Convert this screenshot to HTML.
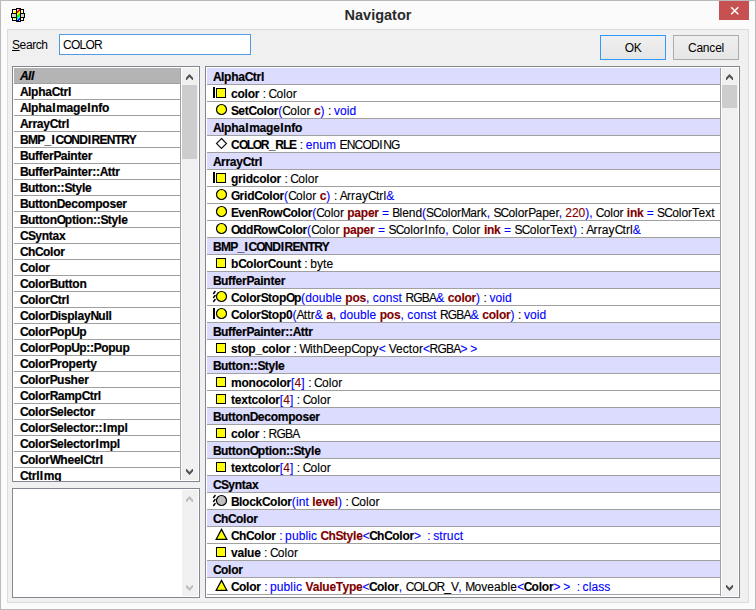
<!DOCTYPE html>
<html><head><meta charset="utf-8"><title>Navigator</title>
<style>
*{box-sizing:border-box}
html,body{margin:0;padding:0}
body{width:756px;height:610px;position:relative;overflow:hidden;background:#fbfbfb;font-family:"Liberation Sans",sans-serif;font-size:11px;color:#000}
.abs{position:absolute}
#outer{left:0;top:0;width:756px;height:610px;border:1px solid #bababa}
#title{left:0;width:756px;top:5px;text-align:center;font-weight:bold;font-size:14.5px;color:#2b2b2b;line-height:20px}
#close{left:719px;top:1px;width:30px;height:19px;background:#c75050}
#panel{left:7px;top:29px;width:742px;height:574px;background:#f0f0f0;border:1px solid #dcdcdc}
.lbl{line-height:13px}
#search{left:59px;top:34px;width:192px;height:21px;background:#fff;border:1px solid #5399e4}
.btn{top:35px;width:66px;height:25px;border:1px solid #acacac;background:linear-gradient(#f0f0f0,#e5e5e5);text-align:center;line-height:25px;font-size:12px}
.list{background:#fff;border:1px solid #828790;overflow:hidden}
.row{position:absolute;left:0;white-space:pre;border-bottom:1px solid #a0a0a0;overflow:hidden;font-size:12px}
.lrow{height:16px;width:166px;line-height:17px;padding-left:6px;font-weight:bold;letter-spacing:-0.22px;-webkit-text-stroke:0.2px currentColor}
.rrow{height:17px;width:513px;line-height:18px}
.hdr{background:#dcdcff;font-weight:bold;padding-left:6px;letter-spacing:-0.22px;-webkit-text-stroke:0.2px currentColor}
.it{padding-left:24px;letter-spacing:0.1px;-webkit-text-stroke:0.12px currentColor}
.Ur{letter-spacing:-0.8px}
.Ir{letter-spacing:0.5px;margin-left:0.5px}
.Ub{letter-spacing:-0.73px}
.Ib{letter-spacing:0.55px;margin-left:0.55px}
.Ob{letter-spacing:-1.4px}
.cl{letter-spacing:-0.9px}
.ab{letter-spacing:-0.5px}
.ic{position:absolute;left:4px;top:0}
.b{font-weight:bold;letter-spacing:-0.22px}
.u{color:#0000ff}
.r{color:#800000;font-weight:bold;letter-spacing:-0.22px}
.rr{color:#800000}
.sb{background:#f0f0f0}
.thumb{background:#cdcdcd}
</style></head><body>
<div id="outer" class="abs"></div>

<svg class="abs" style="left:11px;top:8px" width="14" height="14" viewBox="0 0 14 14" shape-rendering="crispEdges"><rect x="0" y="5" width="1" height="1" fill="#000"/><rect x="0" y="6" width="1" height="1" fill="#000"/><rect x="0" y="7" width="1" height="1" fill="#000"/><rect x="0" y="8" width="1" height="1" fill="#000"/><rect x="0" y="9" width="1" height="1" fill="#000"/><rect x="1" y="1" width="1" height="1" fill="#000"/><rect x="1" y="2" width="1" height="1" fill="#000"/><rect x="1" y="3" width="1" height="1" fill="#000"/><rect x="1" y="4" width="1" height="1" fill="#000"/><rect x="1" y="5" width="1" height="1" fill="#000"/><rect x="1" y="6" width="1" height="1" fill="#d0d0d0"/><rect x="1" y="7" width="1" height="1" fill="#d0d0d0"/><rect x="1" y="8" width="1" height="1" fill="#d0d0d0"/><rect x="1" y="9" width="1" height="1" fill="#000"/><rect x="1" y="10" width="1" height="1" fill="#000"/><rect x="1" y="11" width="1" height="1" fill="#000"/><rect x="1" y="12" width="1" height="1" fill="#000"/><rect x="2" y="1" width="1" height="1" fill="#000"/><rect x="2" y="2" width="1" height="1" fill="#ffffff"/><rect x="2" y="3" width="1" height="1" fill="#ffffff"/><rect x="2" y="4" width="1" height="1" fill="#ffffff"/><rect x="2" y="5" width="1" height="1" fill="#000"/><rect x="2" y="6" width="1" height="1" fill="#d0d0d0"/><rect x="2" y="7" width="1" height="1" fill="#d0d0d0"/><rect x="2" y="8" width="1" height="1" fill="#d0d0d0"/><rect x="2" y="9" width="1" height="1" fill="#000"/><rect x="2" y="10" width="1" height="1" fill="#ffffff"/><rect x="2" y="11" width="1" height="1" fill="#ffffff"/><rect x="2" y="12" width="1" height="1" fill="#000"/><rect x="3" y="1" width="1" height="1" fill="#000"/><rect x="3" y="2" width="1" height="1" fill="#ffffff"/><rect x="3" y="3" width="1" height="1" fill="#ffff00"/><rect x="3" y="4" width="1" height="1" fill="#ffff00"/><rect x="3" y="5" width="1" height="1" fill="#000"/><rect x="3" y="6" width="1" height="1" fill="#d0d0d0"/><rect x="3" y="7" width="1" height="1" fill="#d0d0d0"/><rect x="3" y="8" width="1" height="1" fill="#d0d0d0"/><rect x="3" y="9" width="1" height="1" fill="#000"/><rect x="3" y="10" width="1" height="1" fill="#ffff00"/><rect x="3" y="11" width="1" height="1" fill="#ffffff"/><rect x="3" y="12" width="1" height="1" fill="#000"/><rect x="4" y="1" width="1" height="1" fill="#000"/><rect x="4" y="2" width="1" height="1" fill="#ffffff"/><rect x="4" y="3" width="1" height="1" fill="#ffff00"/><rect x="4" y="4" width="1" height="1" fill="#ffff00"/><rect x="4" y="5" width="1" height="1" fill="#000"/><rect x="4" y="6" width="1" height="1" fill="#d0d0d0"/><rect x="4" y="7" width="1" height="1" fill="#d0d0d0"/><rect x="4" y="8" width="1" height="1" fill="#d0d0d0"/><rect x="4" y="9" width="1" height="1" fill="#000"/><rect x="4" y="10" width="1" height="1" fill="#ffff00"/><rect x="4" y="11" width="1" height="1" fill="#ffffff"/><rect x="4" y="12" width="1" height="1" fill="#000"/><rect x="5" y="0" width="1" height="1" fill="#000"/><rect x="5" y="1" width="1" height="1" fill="#000"/><rect x="5" y="2" width="1" height="1" fill="#000"/><rect x="5" y="3" width="1" height="1" fill="#000"/><rect x="5" y="4" width="1" height="1" fill="#000"/><rect x="5" y="5" width="1" height="1" fill="#000"/><rect x="5" y="6" width="1" height="1" fill="#000"/><rect x="5" y="7" width="1" height="1" fill="#000"/><rect x="5" y="8" width="1" height="1" fill="#000"/><rect x="5" y="9" width="1" height="1" fill="#000"/><rect x="5" y="10" width="1" height="1" fill="#000"/><rect x="5" y="11" width="1" height="1" fill="#000"/><rect x="5" y="12" width="1" height="1" fill="#000"/><rect x="5" y="13" width="1" height="1" fill="#000"/><rect x="6" y="0" width="1" height="1" fill="#000"/><rect x="6" y="1" width="1" height="1" fill="#d8d8d8"/><rect x="6" y="2" width="1" height="1" fill="#d8d8d8"/><rect x="6" y="3" width="1" height="1" fill="#ff0000"/><rect x="6" y="4" width="1" height="1" fill="#ff0000"/><rect x="6" y="5" width="1" height="1" fill="#ffff00"/><rect x="6" y="6" width="1" height="1" fill="#ffff00"/><rect x="6" y="7" width="1" height="1" fill="#80ff00"/><rect x="6" y="8" width="1" height="1" fill="#00ff00"/><rect x="6" y="9" width="1" height="1" fill="#00ff00"/><rect x="6" y="10" width="1" height="1" fill="#00ffff"/><rect x="6" y="11" width="1" height="1" fill="#00ffff"/><rect x="6" y="12" width="1" height="1" fill="#0000ff"/><rect x="6" y="13" width="1" height="1" fill="#000"/><rect x="7" y="0" width="1" height="1" fill="#000"/><rect x="7" y="1" width="1" height="1" fill="#d8d8d8"/><rect x="7" y="2" width="1" height="1" fill="#ff0000"/><rect x="7" y="3" width="1" height="1" fill="#ff0000"/><rect x="7" y="4" width="1" height="1" fill="#ffff00"/><rect x="7" y="5" width="1" height="1" fill="#ffff00"/><rect x="7" y="6" width="1" height="1" fill="#80ff00"/><rect x="7" y="7" width="1" height="1" fill="#00ff00"/><rect x="7" y="8" width="1" height="1" fill="#00ff00"/><rect x="7" y="9" width="1" height="1" fill="#00ffff"/><rect x="7" y="10" width="1" height="1" fill="#00ffff"/><rect x="7" y="11" width="1" height="1" fill="#0000ff"/><rect x="7" y="12" width="1" height="1" fill="#0000ff"/><rect x="7" y="13" width="1" height="1" fill="#000"/><rect x="8" y="0" width="1" height="1" fill="#000"/><rect x="8" y="1" width="1" height="1" fill="#ff0000"/><rect x="8" y="2" width="1" height="1" fill="#ff0000"/><rect x="8" y="3" width="1" height="1" fill="#ffff00"/><rect x="8" y="4" width="1" height="1" fill="#ffff00"/><rect x="8" y="5" width="1" height="1" fill="#80ff00"/><rect x="8" y="6" width="1" height="1" fill="#00ff00"/><rect x="8" y="7" width="1" height="1" fill="#00ff00"/><rect x="8" y="8" width="1" height="1" fill="#00ffff"/><rect x="8" y="9" width="1" height="1" fill="#00ffff"/><rect x="8" y="10" width="1" height="1" fill="#0000ff"/><rect x="8" y="11" width="1" height="1" fill="#0000ff"/><rect x="8" y="12" width="1" height="1" fill="#d8d8d8"/><rect x="8" y="13" width="1" height="1" fill="#000"/><rect x="9" y="0" width="1" height="1" fill="#000"/><rect x="9" y="1" width="1" height="1" fill="#000"/><rect x="9" y="2" width="1" height="1" fill="#000"/><rect x="9" y="3" width="1" height="1" fill="#000"/><rect x="9" y="4" width="1" height="1" fill="#000"/><rect x="9" y="5" width="1" height="1" fill="#000"/><rect x="9" y="6" width="1" height="1" fill="#000"/><rect x="9" y="7" width="1" height="1" fill="#000"/><rect x="9" y="8" width="1" height="1" fill="#000"/><rect x="9" y="9" width="1" height="1" fill="#000"/><rect x="9" y="10" width="1" height="1" fill="#000"/><rect x="9" y="11" width="1" height="1" fill="#000"/><rect x="9" y="12" width="1" height="1" fill="#000"/><rect x="9" y="13" width="1" height="1" fill="#000"/><rect x="10" y="1" width="1" height="1" fill="#000"/><rect x="10" y="2" width="1" height="1" fill="#ffffff"/><rect x="10" y="3" width="1" height="1" fill="#ffff00"/><rect x="10" y="4" width="1" height="1" fill="#ffff00"/><rect x="10" y="5" width="1" height="1" fill="#000"/><rect x="10" y="6" width="1" height="1" fill="#d0d0d0"/><rect x="10" y="7" width="1" height="1" fill="#d0d0d0"/><rect x="10" y="8" width="1" height="1" fill="#d0d0d0"/><rect x="10" y="9" width="1" height="1" fill="#000"/><rect x="10" y="10" width="1" height="1" fill="#ffff00"/><rect x="10" y="11" width="1" height="1" fill="#ffffff"/><rect x="10" y="12" width="1" height="1" fill="#000"/><rect x="11" y="1" width="1" height="1" fill="#000"/><rect x="11" y="2" width="1" height="1" fill="#ffffff"/><rect x="11" y="3" width="1" height="1" fill="#ffffff"/><rect x="11" y="4" width="1" height="1" fill="#ffffff"/><rect x="11" y="5" width="1" height="1" fill="#000"/><rect x="11" y="6" width="1" height="1" fill="#d0d0d0"/><rect x="11" y="7" width="1" height="1" fill="#d0d0d0"/><rect x="11" y="8" width="1" height="1" fill="#d0d0d0"/><rect x="11" y="9" width="1" height="1" fill="#000"/><rect x="11" y="10" width="1" height="1" fill="#ffffff"/><rect x="11" y="11" width="1" height="1" fill="#ffffff"/><rect x="11" y="12" width="1" height="1" fill="#000"/><rect x="12" y="1" width="1" height="1" fill="#000"/><rect x="12" y="2" width="1" height="1" fill="#000"/><rect x="12" y="3" width="1" height="1" fill="#000"/><rect x="12" y="4" width="1" height="1" fill="#000"/><rect x="12" y="5" width="1" height="1" fill="#000"/><rect x="12" y="6" width="1" height="1" fill="#d0d0d0"/><rect x="12" y="7" width="1" height="1" fill="#d0d0d0"/><rect x="12" y="8" width="1" height="1" fill="#d0d0d0"/><rect x="12" y="9" width="1" height="1" fill="#000"/><rect x="12" y="10" width="1" height="1" fill="#000"/><rect x="12" y="11" width="1" height="1" fill="#000"/><rect x="12" y="12" width="1" height="1" fill="#000"/><rect x="13" y="5" width="1" height="1" fill="#000"/><rect x="13" y="6" width="1" height="1" fill="#000"/><rect x="13" y="7" width="1" height="1" fill="#000"/><rect x="13" y="8" width="1" height="1" fill="#000"/><rect x="13" y="9" width="1" height="1" fill="#000"/></svg>
<div id="title" class="abs">Navigator</div>
<div id="close" class="abs"><svg width="30" height="19" viewBox="0 0 30 19"><path d="M12.2 6.2 L19.3 13.3 M19.3 6.2 L12.2 13.3" stroke="#fff" stroke-width="1.5"/></svg></div>
<div id="panel" class="abs"></div>
<div class="abs lbl" style="left:12px;top:39px;font-size:12px;letter-spacing:-0.4px"><span style="text-decoration:underline">S</span>earch</div>
<div id="search" class="abs"><div class="abs lbl" style="left:3px;top:4px;font-size:12px;letter-spacing:-0.75px">COLOR</div></div>
<div class="abs btn" style="left:600px;border-color:#3399ff;letter-spacing:-0.5px">OK</div>
<div class="abs btn" style="left:673px;letter-spacing:-0.2px">Cancel</div>

<div class="abs list" style="left:12px;top:66px;width:188px;height:416px">
<div class="row lrow" style="top:1px;left:1px;background:#b4b4b4;font-style:italic;"><span class="Ub">A</span>ll</div>
<div class="row lrow" style="top:17px;left:1px;"><span class="Ub">A</span>lpha<span class="Ub">C</span>trl</div>
<div class="row lrow" style="top:33px;left:1px;"><span class="Ub">A</span>lpha<span class="Ib">I</span>mage<span class="Ib">I</span>nfo</div>
<div class="row lrow" style="top:49px;left:1px;"><span class="Ub">A</span>rray<span class="Ub">C</span>trl</div>
<div class="row lrow" style="top:65px;left:1px;"><span class="Ub">BMP</span>_<span class="Ib">I</span><span class="Ub">C</span><span class="Ob">O</span><span class="Ub">ND</span><span class="Ib">I</span><span class="Ub">RENTRY</span></div>
<div class="row lrow" style="top:81px;left:1px;"><span class="Ub">B</span>uffer<span class="Ub">P</span>ainter</div>
<div class="row lrow" style="top:97px;left:1px;"><span class="Ub">B</span>uffer<span class="Ub">P</span>ainter::<span class="Ub">A</span>ttr</div>
<div class="row lrow" style="top:113px;left:1px;"><span class="Ub">B</span>utton::<span class="Ub">S</span>tyle</div>
<div class="row lrow" style="top:129px;left:1px;"><span class="Ub">B</span>utton<span class="Ub">D</span>ecomposer</div>
<div class="row lrow" style="top:145px;left:1px;"><span class="Ub">B</span>utton<span class="Ob">O</span>ption::<span class="Ub">S</span>tyle</div>
<div class="row lrow" style="top:161px;left:1px;"><span class="Ub">CS</span>yntax</div>
<div class="row lrow" style="top:177px;left:1px;"><span class="Ub">C</span>h<span class="Ub">C</span>olor</div>
<div class="row lrow" style="top:193px;left:1px;"><span class="Ub">C</span>olor</div>
<div class="row lrow" style="top:209px;left:1px;"><span class="Ub">C</span>olor<span class="Ub">B</span>utton</div>
<div class="row lrow" style="top:225px;left:1px;"><span class="Ub">C</span>olor<span class="Ub">C</span>trl</div>
<div class="row lrow" style="top:241px;left:1px;"><span class="Ub">C</span>olor<span class="Ub">D</span>isplay<span class="Ub">N</span>ull</div>
<div class="row lrow" style="top:257px;left:1px;"><span class="Ub">C</span>olor<span class="Ub">P</span>op<span class="Ub">U</span>p</div>
<div class="row lrow" style="top:273px;left:1px;"><span class="Ub">C</span>olor<span class="Ub">P</span>op<span class="Ub">U</span>p::<span class="Ub">P</span>opup</div>
<div class="row lrow" style="top:289px;left:1px;"><span class="Ub">C</span>olor<span class="Ub">P</span>roperty</div>
<div class="row lrow" style="top:305px;left:1px;"><span class="Ub">C</span>olor<span class="Ub">P</span>usher</div>
<div class="row lrow" style="top:321px;left:1px;"><span class="Ub">C</span>olor<span class="Ub">R</span>amp<span class="Ub">C</span>trl</div>
<div class="row lrow" style="top:337px;left:1px;"><span class="Ub">C</span>olor<span class="Ub">S</span>elector</div>
<div class="row lrow" style="top:353px;left:1px;"><span class="Ub">C</span>olor<span class="Ub">S</span>elector::<span class="Ib">I</span>mpl</div>
<div class="row lrow" style="top:369px;left:1px;"><span class="Ub">C</span>olor<span class="Ub">S</span>elector<span class="Ib">I</span>mpl</div>
<div class="row lrow" style="top:385px;left:1px;"><span class="Ub">C</span>olor<span class="Ub">W</span>heel<span class="Ub">C</span>trl</div>
<div class="row lrow" style="top:401px;left:1px;"><span class="Ub">C</span>trl<span class="Ib">I</span>mg</div>
<div class="abs" style="left:0;top:0;width:186px;height:1px;background:#fff"></div>
<div class="abs" style="left:167px;top:1px;width:1px;height:412px;background:#a0a0a0"></div>
<div class="abs" style="left:168px;top:0;width:18px;height:414px;background:#fff"></div>
<div class="abs sb" style="left:169px;top:1px;width:16px;height:412px"></div>
<div class="abs thumb" style="left:169px;top:18px;width:15px;height:74px"></div>
<svg class="abs" style="left:173px;top:7px" width="7" height="6" viewBox="0 0 7 6"><polygon points="0,3.8 3.5,0 7,3.8 7,6 6.26,6 3.5,3 0.74,6 0,6" fill="#505050"/></svg>
<svg class="abs" style="left:173px;top:402px" width="7" height="6" viewBox="0 0 7 6"><polygon points="0,3.8 3.5,0 7,3.8 7,6 6.26,6 3.5,3 0.74,6 0,6" fill="#505050" transform="translate(0,6) scale(1,-1)"/></svg>
</div>
<div class="abs list" style="left:12px;top:488px;width:188px;height:110px">
<div class="abs sb" style="left:169px;top:1px;width:16px;height:106px"></div>
<svg class="abs" style="left:173px;top:7px" width="7" height="6" viewBox="0 0 7 6"><polygon points="0,3.8 3.5,0 7,3.8 7,6 6.26,6 3.5,3 0.74,6 0,6" fill="#bcbcbc"/></svg>
<svg class="abs" style="left:173px;top:96px" width="7" height="6" viewBox="0 0 7 6"><polygon points="0,3.8 3.5,0 7,3.8 7,6 6.26,6 3.5,3 0.74,6 0,6" fill="#bcbcbc" transform="translate(0,6) scale(1,-1)"/></svg>
</div>
<div class="abs list" style="left:205px;top:66px;width:535px;height:532px">
<div class="row rrow hdr" style="top:1px;left:1px"><span class="Ub">A</span>lpha<span class="Ub">C</span>trl</div>
<div class="row rrow it" style="top:18px;left:1px"><svg class="ic" width="20" height="16" viewBox="0 0 20 16"><rect x="5.5" y="3.5" width="9" height="9" fill="#ff0" stroke="#000"/><rect x="2" y="2" width="2" height="11" fill="#000"/></svg><span class="b">color</span> <span class="cl">:</span> <span class="Ur">C</span>olor</div>
<div class="row rrow it" style="top:35px;left:1px"><svg class="ic" width="20" height="16" viewBox="0 0 20 16"><circle cx="10.5" cy="7.5" r="5" fill="#ff0" stroke="#000" stroke-width="1.2"/></svg><span class="b"><span class="Ub">S</span>et<span class="Ub">C</span>olor</span><span class="u">(</span><span class="Ur">C</span>olor <span class="r">c</span><span class="u">)</span> <span class="cl">:</span> <span class="u">void</span></div>
<div class="row rrow hdr" style="top:52px;left:1px"><span class="Ub">A</span>lpha<span class="Ib">I</span>mage<span class="Ib">I</span>nfo</div>
<div class="row rrow it" style="top:69px;left:1px"><svg class="ic" width="20" height="16" viewBox="0 0 20 16"><path d="M10.5 2.5 L15.5 7.5 L10.5 12.5 L5.5 7.5 Z" fill="#fff" stroke="#111" stroke-width="1.15"/></svg><span class="b"><span class="Ub">C</span><span class="Ob">OLO</span><span class="Ub">R</span>_<span class="Ub">R</span><span class="Ob">L</span><span class="Ub">E</span></span> <span class="cl">:</span> <span class="u">enum</span> <span class="Ur">ENCOD</span><span class="Ir">I</span><span class="Ur">NG</span></div>
<div class="row rrow hdr" style="top:86px;left:1px"><span class="Ub">A</span>rray<span class="Ub">C</span>trl</div>
<div class="row rrow it" style="top:103px;left:1px"><svg class="ic" width="20" height="16" viewBox="0 0 20 16"><rect x="5.5" y="3.5" width="9" height="9" fill="#ff0" stroke="#000"/><rect x="2" y="2" width="2" height="11" fill="#000"/></svg><span class="b">gridcolor</span> <span class="cl">:</span> <span class="Ur">C</span>olor</div>
<div class="row rrow it" style="top:120px;left:1px"><svg class="ic" width="20" height="16" viewBox="0 0 20 16"><circle cx="10.5" cy="7.5" r="5" fill="#ff0" stroke="#000" stroke-width="1.2"/></svg><span class="b"><span class="Ub">G</span>rid<span class="Ub">C</span>olor</span><span class="u">(</span><span class="Ur">C</span>olor <span class="r">c</span><span class="u">)</span> <span class="cl">:</span> <span class="Ur">A</span>rray<span class="Ur">C</span>trl<span class="u">&amp;</span></div>
<div class="row rrow it" style="top:137px;left:1px"><svg class="ic" width="20" height="16" viewBox="0 0 20 16"><circle cx="10.5" cy="7.5" r="5" fill="#ff0" stroke="#000" stroke-width="1.2"/></svg><span style="display:inline-block;width:486px;overflow:hidden;vertical-align:top;white-space:pre;letter-spacing:-0.04px"><span class="b"><span class="Ub">E</span>ven<span class="Ub">R</span>ow<span class="Ub">C</span>olor</span><span class="u">(</span><span class="Ur">C</span>olor <span class="r">paper</span><span class="u"> = </span><span class="Ur">B</span>lend<span class="u">(</span><span class="Ur">SC</span>olor<span class="Ur">M</span>ark<span class="u">, </span><span class="Ur">SC</span>olor<span class="Ur">P</span>aper<span class="u">, </span><span class="rr">220</span><span class="u">), </span><span class="Ur">C</span>olor <span class="r">ink</span><span class="u"> = </span><span class="Ur">SC</span>olor<span class="Ur">T</span>ext</span></div>
<div class="row rrow it" style="top:154px;left:1px"><svg class="ic" width="20" height="16" viewBox="0 0 20 16"><circle cx="10.5" cy="7.5" r="5" fill="#ff0" stroke="#000" stroke-width="1.2"/></svg><span class="b"><span class="Ob">O</span>dd<span class="Ub">R</span>ow<span class="Ub">C</span>olor</span><span class="u">(</span><span class="Ur">C</span>olor <span class="r">paper</span><span class="u"> = </span><span class="Ur">SC</span>olor<span class="Ir">I</span>nfo<span class="u">, </span><span class="Ur">C</span>olor <span class="r">ink</span><span class="u"> = </span><span class="Ur">SC</span>olor<span class="Ur">T</span>ext<span class="u">)</span> <span class="cl">:</span> <span class="Ur">A</span>rray<span class="Ur">C</span>trl<span class="u">&amp;</span></div>
<div class="row rrow hdr" style="top:171px;left:1px"><span class="Ub">BMP</span>_<span class="Ib">I</span><span class="Ub">C</span><span class="Ob">O</span><span class="Ub">ND</span><span class="Ib">I</span><span class="Ub">RENTRY</span></div>
<div class="row rrow it" style="top:188px;left:1px"><svg class="ic" width="20" height="16" viewBox="0 0 20 16"><rect x="5.5" y="3.5" width="9" height="9" fill="#ff0" stroke="#000"/></svg><span class="b">b<span class="Ub">C</span>olor<span class="Ub">C</span>ount</span> <span class="cl">:</span> byte</div>
<div class="row rrow hdr" style="top:205px;left:1px"><span class="Ub">B</span>uffer<span class="Ub">P</span>ainter</div>
<div class="row rrow it" style="top:222px;left:1px"><svg class="ic" width="20" height="16" viewBox="0 0 20 16"><circle cx="10.5" cy="7.5" r="5" fill="#ff0" stroke="#000" stroke-width="1.2"/><path d="M4.1 2.5 L2.6 4.5 M4.1 6.5 L2.6 8.5 M4.1 10.5 L2.6 12.5" stroke="#000" stroke-width="1.5" stroke-linecap="round" fill="none"/></svg><span class="b"><span class="Ub">C</span>olor<span class="Ub">S</span>top<span class="Ob">O</span>p</span><span class="u">(</span><span class="u">double </span><span class="r">pos</span><span class="u">, </span><span class="u">const </span><span class="Ur">RGBA</span><span class="u">&amp; </span><span class="r">color</span><span class="u">)</span> <span class="cl">:</span> <span class="u">void</span></div>
<div class="row rrow it" style="top:239px;left:1px"><svg class="ic" width="20" height="16" viewBox="0 0 20 16"><circle cx="10.5" cy="7.5" r="5" fill="#ff0" stroke="#000" stroke-width="1.2"/><rect x="2" y="2" width="2" height="11" fill="#000"/></svg><span class="b"><span class="Ub">C</span>olor<span class="Ub">S</span>top0</span><span class="u">(</span><span class="Ur">A</span>ttr<span class="u">&amp; </span><span class="r">a</span><span class="u">, </span><span class="u">double </span><span class="r">pos</span><span class="u">, </span><span class="u">const </span><span class="Ur">RGBA</span><span class="u">&amp; </span><span class="r">color</span><span class="u">)</span> <span class="cl">:</span> <span class="u">void</span></div>
<div class="row rrow hdr" style="top:256px;left:1px"><span class="Ub">B</span>uffer<span class="Ub">P</span>ainter::<span class="Ub">A</span>ttr</div>
<div class="row rrow it" style="top:273px;left:1px"><svg class="ic" width="20" height="16" viewBox="0 0 20 16"><rect x="5.5" y="3.5" width="9" height="9" fill="#ff0" stroke="#000"/></svg><span class="b">stop_color</span> <span class="cl">:</span> <span class="Ur">W</span>ith<span class="Ur">D</span>eep<span class="Ur">C</span>opy<span class="u"><span class="ab">&lt;</span> </span><span class="Ur">V</span>ector<span class="u"><span class="ab">&lt;</span></span><span class="Ur">RGBA</span><span class="u"><span class="ab">&gt;</span> <span class="ab">&gt;</span></span></div>
<div class="row rrow hdr" style="top:290px;left:1px"><span class="Ub">B</span>utton::<span class="Ub">S</span>tyle</div>
<div class="row rrow it" style="top:307px;left:1px"><svg class="ic" width="20" height="16" viewBox="0 0 20 16"><rect x="5.5" y="3.5" width="9" height="9" fill="#ff0" stroke="#000"/></svg><span class="b">monocolor</span><span class="u">[</span><span class="rr">4</span><span class="u">]</span> <span class="cl">:</span> <span class="Ur">C</span>olor</div>
<div class="row rrow it" style="top:324px;left:1px"><svg class="ic" width="20" height="16" viewBox="0 0 20 16"><rect x="5.5" y="3.5" width="9" height="9" fill="#ff0" stroke="#000"/></svg><span class="b">textcolor</span><span class="u">[</span><span class="rr">4</span><span class="u">]</span> <span class="cl">:</span> <span class="Ur">C</span>olor</div>
<div class="row rrow hdr" style="top:341px;left:1px"><span class="Ub">B</span>utton<span class="Ub">D</span>ecomposer</div>
<div class="row rrow it" style="top:358px;left:1px"><svg class="ic" width="20" height="16" viewBox="0 0 20 16"><rect x="5.5" y="3.5" width="9" height="9" fill="#ff0" stroke="#000"/></svg><span class="b">color</span> <span class="cl">:</span> <span class="Ur">RGBA</span></div>
<div class="row rrow hdr" style="top:375px;left:1px"><span class="Ub">B</span>utton<span class="Ob">O</span>ption::<span class="Ub">S</span>tyle</div>
<div class="row rrow it" style="top:392px;left:1px"><svg class="ic" width="20" height="16" viewBox="0 0 20 16"><rect x="5.5" y="3.5" width="9" height="9" fill="#ff0" stroke="#000"/></svg><span class="b">textcolor</span><span class="u">[</span><span class="rr">4</span><span class="u">]</span> <span class="cl">:</span> <span class="Ur">C</span>olor</div>
<div class="row rrow hdr" style="top:409px;left:1px"><span class="Ub">CS</span>yntax</div>
<div class="row rrow it" style="top:426px;left:1px"><svg class="ic" width="20" height="16" viewBox="0 0 20 16"><circle cx="10.5" cy="7.5" r="5" fill="#c0c0c0" stroke="#000" stroke-width="1.2"/><path d="M4.1 2.5 L2.6 4.5 M4.1 6.5 L2.6 8.5 M4.1 10.5 L2.6 12.5" stroke="#000" stroke-width="1.5" stroke-linecap="round" fill="none"/></svg><span class="b"><span class="Ub">B</span>lock<span class="Ub">C</span>olor</span><span class="u">(</span><span class="u">int </span><span class="r">level</span><span class="u">)</span> <span class="cl">:</span> <span class="Ur">C</span>olor</div>
<div class="row rrow hdr" style="top:443px;left:1px"><span class="Ub">C</span>h<span class="Ub">C</span>olor</div>
<div class="row rrow it" style="top:460px;left:1px"><svg class="ic" width="20" height="16" viewBox="0 0 20 16"><path d="M10.5 2.4 L15.8 12.3 L5.2 12.3 Z" fill="#ff0" stroke="#000" stroke-width="1.3" stroke-linejoin="miter"/></svg><span class="b"><span class="Ub">C</span>h<span class="Ub">C</span>olor</span><span class="u"> <span class="cl">:</span> public </span><span class="r"><span class="Ub">C</span>h<span class="Ub">S</span>tyle</span><span class="u"><span class="ab">&lt;</span></span><span class="b"><span class="Ub">C</span>h<span class="Ub">C</span>olor</span><span class="u"><span class="ab">&gt;</span>  <span class="cl">:</span> struct</span></div>
<div class="row rrow it" style="top:477px;left:1px"><svg class="ic" width="20" height="16" viewBox="0 0 20 16"><rect x="5.5" y="3.5" width="9" height="9" fill="#ff0" stroke="#000"/></svg><span class="b">value</span> <span class="cl">:</span> <span class="Ur">C</span>olor</div>
<div class="row rrow hdr" style="top:494px;left:1px"><span class="Ub">C</span>olor</div>
<div class="row rrow it" style="top:511px;left:1px"><svg class="ic" width="20" height="16" viewBox="0 0 20 16"><path d="M10.5 2.4 L15.8 12.3 L5.2 12.3 Z" fill="#ff0" stroke="#000" stroke-width="1.3" stroke-linejoin="miter"/></svg><span class="b"><span class="Ub">C</span>olor</span><span class="u"> <span class="cl">:</span> public </span><span class="r"><span class="Ub">V</span>alue<span class="Ub">T</span>ype</span><span class="u"><span class="ab">&lt;</span></span><span class="b"><span class="Ub">C</span>olor</span><span class="u">, </span><span class="Ur">COLOR</span>_<span class="Ur">V</span><span class="u">, </span><span class="Ur">M</span>oveable<span class="u"><span class="ab">&lt;</span></span><span class="b"><span class="Ub">C</span>olor</span><span class="u"><span class="ab">&gt;</span> <span class="ab">&gt;</span>  <span class="cl">:</span> class</span></div>
<div class="abs" style="left:0;top:0;width:533px;height:1px;background:#fff"></div>
<div class="abs" style="left:514px;top:1px;width:1px;height:528px;background:#a0a0a0"></div>
<div class="abs" style="left:515px;top:0;width:18px;height:530px;background:#fff"></div>
<div class="abs sb" style="left:516px;top:1px;width:16px;height:528px"></div>
<div class="abs thumb" style="left:516px;top:18px;width:15px;height:23px"></div>
<svg class="abs" style="left:520px;top:7px" width="7" height="6" viewBox="0 0 7 6"><polygon points="0,3.8 3.5,0 7,3.8 7,6 6.26,6 3.5,3 0.74,6 0,6" fill="#505050"/></svg>
<svg class="abs" style="left:520px;top:518px" width="7" height="6" viewBox="0 0 7 6"><polygon points="0,3.8 3.5,0 7,3.8 7,6 6.26,6 3.5,3 0.74,6 0,6" fill="#505050" transform="translate(0,6) scale(1,-1)"/></svg>
</div>
</body></html>
